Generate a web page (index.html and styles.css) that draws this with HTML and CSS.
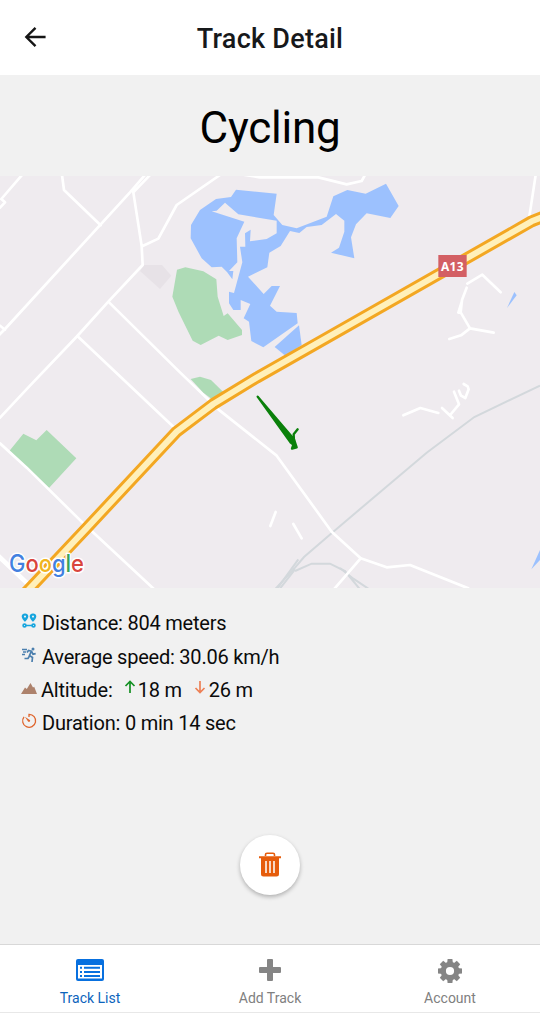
FILE: index.html
```html
<!DOCTYPE html>
<html lang="en">
<head>
<meta charset="utf-8">
<title>Track Detail</title>
<link rel="stylesheet" href="styles.css">
</head>
<body>
<div class="app">
  <header class="header">
    <svg class="back" viewBox="0 0 24 24"><path d="M23 12H2M12 2 2 12l10 10"/></svg>
    <h1 class="title">Track Detail</h1>
  </header>
  <main class="content">
    <h2 class="name">Cycling</h2>
    <svg class="map" viewBox="0 0 1620 1236">
      <rect class="land" width="1620" height="1236"/>
      <path class="plot" d="M420 285 432 267H486L514 299 480 339Z"/>
      <g class="park">
        <path transform="translate(480 -3)" d="M51 284 76 277 130 289 169 313 173 365 191 423 203 415 246 465V480L203 495 176 482 122 510 98 497 56 412 37 365Z"/>
        <path d="M572 609 600 602 633 612 669 647 635 669 610 650Z"/>
        <path transform="translate(0 612)" d="M28 213 70 161 109 181 140 150 229 235 147 324Z"/>
      </g>
      <g class="water">
        <path transform="translate(480 -3)" d="M168 72 213 66 228 44 350 56 341 120 367 150 410 160 500 125 520 64 562 45 617 56 678 26 716 93 691 129 620 115 588 148 573 187 583 250 513 233 537 218 553 170V137L528 117 485 150 440 156 418 174 390 168 362 213 328 233 322 277 264 305 311 357 335 333H360L330 392 350 410 410 414 413 445 310 517 274 498 267 440 251 430 271 387 242 375V405H220L207 385V350L222 354 247 262 240 215H256L255 175 272 164 270 199 320 192 350 175V137L235 118 195 83 170 107 155 109 253 140 230 190 232 262 207 288 220 288 217 313 201 291 185 275 155 277 125 250 92 190 93 150 120 105Z"/>
        <path d="M824 513 897 448 905 507 857 540Z"/>
        <path d="M1521 396 1543 348 1550 358Z"/>
        <path d="M1594 1180 1620 1122V1152Z"/>
      </g>
      <g class="rail">
        <path d="M1620 629 1423 723 1280 830 1000 1067 912 1143 885 1175 825 1240"/>
        <path d="M895 1150 830 1240M885 1185 935 1163H990L1035 1185 1080 1240"/>
        <path d="M838 1240 885 1180M1020 1176 1060 1208 1108 1240"/>
      </g>
      <g class="road">
        <g transform="translate(0 -3)">
          <path d="M66 0 4 72 15 82 0 98M186 0 192 45 302 151M435 0 390 52 15 462-10 487M450 0 400 52 425 213 428 270 325 380 232 483 90 632 0 728M428 213 475 191 530 90 660 0M0 452 15 464M325 380 540 592 655 703 830 842 995 1070 1082 1150 1160 1177 1230 1170 1405 1240"/>
          <path d="M232 483 520 755M0 805 80 878 250 1045 465 1245M1082 1150 1000 1245M735 0 780 7H955L1040 28 1085 18 1095 0M1607 0 1588 125"/>
        </g>
        <g transform="translate(960 -3)"><path d="M442 326 487 299 542 352M440 338 426 375 422 412 415 413 426 378M422 412 450 460 521 473M450 460 423 481 388 492"/></g>
        <g transform="translate(1020 582)"><path d="M190 136 241 114 295 129M306 114 338 144M333 132 357 103 342 65M357 62 363 77 376 84 386 58 383 49 371 42"/></g>
        <path d="M827 1008 811 1050M880 1044 905 1087"/>
      </g>
      <path class="road road-wide" d="M-5 1140 85 1225"/>
      <path class="motorway" d="M70 1258 262 1054 530 767 640 684 770 605 960 497 1595 136 1630 122"/>
      <path class="motorway-core" d="M70 1258 262 1054 530 767 640 684 770 605 960 497 1595 136 1630 122"/>
      <g class="track">
        <path fill="#0b800b" d="M773 662 872 800 880 806 876 818 890 814 882 790Z"/>
        <path d="M882 796 881 775 893 760"/>
      </g>
      <rect class="shield" x="1315" y="237" width="85" height="66"/>
      <text class="shield-text" x="1357" y="284" textLength="68">A13</text>
      <text class="google" x="27" y="1187" textLength="225" lengthAdjust="spacingAndGlyphs"><tspan fill="#4280e0">G</tspan><tspan fill="#d9453d">o</tspan><tspan fill="#f0b51e">o</tspan><tspan fill="#4280e0">g</tspan><tspan fill="#38a35a">l</tspan><tspan fill="#d9453d">e</tspan></text>
    </svg>
    <ul class="stats">
      <li>
        <svg class="ico" viewBox="0 0 16 16"><g fill="#16a5de"><path fill-rule="evenodd" d="M4 .5a3 3 0 0 1 3.300 3.100C7.300 5.700 4 9 4 9S.7 5.700.7 3.600A3 3 0 0 1 4 .5Zm0 2a1 1 0 1 0 .01 0ZM12 .5a3 3 0 0 1 3.300 3.100C15.300 5.700 12 9 12 9S8.700 5.700 8.700 3.600A3 3 0 0 1 12 .5Zm0 2a1 1 0 1 0 .01 0Z"/></g><path d="M5 12.500h6" stroke="#16a5de" stroke-width="1.500"/><g fill="none" stroke="#16a5de" stroke-width="1.700"><circle cx="3.500" cy="12.500" r="1.400"/><circle cx="12.500" cy="12.500" r="1.400"/></g></svg>
        <span>Distance: 804 meters</span>
      </li>
      <li>
        <svg class="ico" viewBox="0 0 16 16"><g fill="none" stroke="#4b7fae" stroke-width="1.300"><path d="M1 2.500h5M2 5h3M1 7.500h3"/><path d="M6 5.500 7.500 3.500l3 .7 1.500 3 2.700-.5M10 5 8.500 8.500l3 2-.5 4.500M8.500 9 7 11.500H3.500" stroke-width="1.700"/></g><circle cx="12" cy="1.900" r="1.500" fill="#4b7fae"/></svg>
        <span>Average speed: 30.06 km/h</span>
      </li>
      <li class="altitude">
        <svg class="ico" viewBox="0 0 16 16"><path fill="#ad826c" d="M0 13 4 6.500 5.800 8 9.500 2 12 6.500l1.200-.8L16 13Z"/></svg>
        <span>Altitude:</span>
        <svg class="arrow up" viewBox="0 0 12 14"><path d="M6 13V2M1.500 6 6 1.500 10.500 6"/></svg>
        <span>18 m</span>
        <svg class="arrow down" viewBox="0 0 12 14"><path d="M6 1v11M1.500 8 6 12.500 10.500 8"/></svg>
        <span>26 m</span>
      </li>
      <li>
        <svg class="ico" viewBox="0 0 16 16"><path fill="none" stroke="#df652d" stroke-width="1.300" d="M8 4V1.300a6.500 6.500 0 1 1-5 2.500"/><path fill="#df652d" d="m3.800 3.700 5 3.200a1.200 1.200 0 1 1-1.700 1.700Z"/></svg>
        <span>Duration: 0 min 14 sec</span>
      </li>
    </ul>
    <button class="delete" aria-label="Delete">
      <svg viewBox="0 0 22 25"><path d="M6.500 4V2.800Q6.500 1.300 8 1.300h6q1.500 0 1.500 1.500V4" fill="none" stroke="#e65c0b" stroke-width="1.600"/><path fill="#e65c0b" d="M0 4.200h22v2h-2V22q0 2.500-2.500 2.500h-13Q2 24.500 2 22V6.200H0Z"/><path d="M7 9v12M11 9v12M15 9v12" stroke="#fff" stroke-width="1.500"/></svg>
    </button>
  </main>
  <nav class="tabs">
    <a class="tab active">
      <svg class="tab-ico list" viewBox="0 0 28 22"><rect width="28" height="22" rx="2" fill="#0870df"/><path fill="#fff" d="M2 6h24v13.500H2Z"/><path stroke="#0870df" stroke-width="2" d="M4 8.700h2M8 8.700h16M4 12.900h2M8 12.900h16M4 17.100h2M8 17.100h16"/></svg>
      <span>Track List</span>
    </a>
    <a class="tab">
      <svg class="tab-ico plus" viewBox="0 0 22 22"><path fill="#858585" d="M8 1q0-1 1-1h4q1 0 1 1v7h7q1 0 1 1v4q0 1-1 1h-7v7q0 1-1 1H9q-1 0-1-1v-7H1q-1 0-1-1V9q0-1 1-1h7Z"/></svg>
      <span>Add Track</span>
    </a>
    <a class="tab">
      <svg class="tab-ico gear" viewBox="-12 -12 24 24"><g fill="#858585"><path id="tooth" d="M-2.400-12h4.800L3-7h-6Z"/><use href="#tooth" transform="rotate(45)"/><use href="#tooth" transform="rotate(90)"/><use href="#tooth" transform="rotate(135)"/><use href="#tooth" transform="rotate(180)"/><use href="#tooth" transform="rotate(225)"/><use href="#tooth" transform="rotate(270)"/><use href="#tooth" transform="rotate(315)"/></g><circle r="6.700" fill="none" stroke="#858585" stroke-width="5.200"/></svg>
      <span>Account</span>
    </a>
  </nav>
</div>
</body>
</html>
```
FILE: styles.css
```css
* { box-sizing: border-box; }
body { margin: 0; background: #fff; font-family: Roboto, sans-serif; color: #0b0b0b; }
.app { display: flex; flex-direction: column; width: 540px; height: 1016px; }
.header { display: grid; grid-template-columns: 72px 1fr 72px; align-items: center; height: 75px; background: #fff; }
.back { width: 23px; height: 22px; margin-left: 24px; margin-bottom: 1px; fill: none; stroke: #151515; stroke-width: 2.6; }
.title { margin: 2px 0 0; text-align: center; font-size: 27px; font-weight: 500; line-height: 32px; letter-spacing: .25px; color: #17191b; }
.content { display: flex; flex-direction: column; height: 869px; background: #f1f1f1; }
.name { margin: 0; height: 101px; text-align: center; font-size: 44px; font-weight: 400; line-height: 106px; letter-spacing: -.25px; color: #000; }
.map { display: block; width: 540px; height: 412px; flex: none; }
.land { fill: #efebef; }
.plot { fill: #e7e2e7; }
.park { fill: #aedbb6; }
.water { fill: #9cc1fe; }
.rail { fill: none; stroke: #d3d8dc; stroke-width: 6; }
.road { fill: none; stroke: #fff; stroke-width: 8; stroke-linejoin: round; stroke-linecap: round; }
.road-wide { stroke-width: 14; }
.motorway { fill: none; stroke: #f3a722; stroke-width: 36; stroke-linejoin: round; }
.motorway-core { fill: none; stroke: #fff0ba; stroke-width: 18; stroke-linejoin: round; }
.track { fill: none; stroke: #0b800b; stroke-width: 7; stroke-linejoin: round; stroke-linecap: round; }
.shield { fill: #d35f64; }
.shield-text { font: 700 36px "Noto Sans", sans-serif; fill: #fff; text-anchor: middle; }
.google { font: 500 72px Inter, sans-serif; stroke: #fff; stroke-width: 9; paint-order: stroke; stroke-linejoin: round; }
.stats { display: flex; flex-direction: column; margin: 18px 0 0; padding: 0 0 0 21px; list-style: none; }
.stats li { display: flex; align-items: center; height: 33.400px; font-size: 20px; line-height: 33px; letter-spacing: -.22px; white-space: pre; }
.stats span { padding-top: 2px; }
.ico { width: 16px; height: 16px; margin: 0 5px 3px 0; }
.altitude .ico { margin: 0 4px 1px 0; }
.arrow { width: 12px; height: 14px; margin-bottom: 4px; fill: none; stroke-width: 1.700; }
.up { margin-left: 11px; margin-right: 2px; stroke: #149023; }
.down { margin-left: 12px; margin-right: 3px; stroke: #ed8056; }
.delete { display: flex; align-items: center; justify-content: center; width: 60px; height: 60px; margin: 95px auto 0; padding: 0; border: 0; border-radius: 50%; background: #fff; box-shadow: 0 2px 4px rgba(0,0,0,.27); }
.delete svg { width: 22px; height: 25px; }
.tabs { display: flex; height: 69px; background: #fff; border-top: 1px solid #d8d8d8; border-bottom: 1px solid #e8e8e8; }
.tab { display: flex; flex: 1; flex-direction: column; align-items: center; font-size: 14px; line-height: 18px; color: #808080; padding-top: 14px; }
.active { color: #0c64bc; }
.tab-ico { height: 24px; margin-bottom: 6px; }
.list { width: 28px; height: 22px; margin-bottom: 8px; }
.plus { width: 22px; height: 22px; margin-bottom: 8px; }
.gear { width: 24px; }
```
